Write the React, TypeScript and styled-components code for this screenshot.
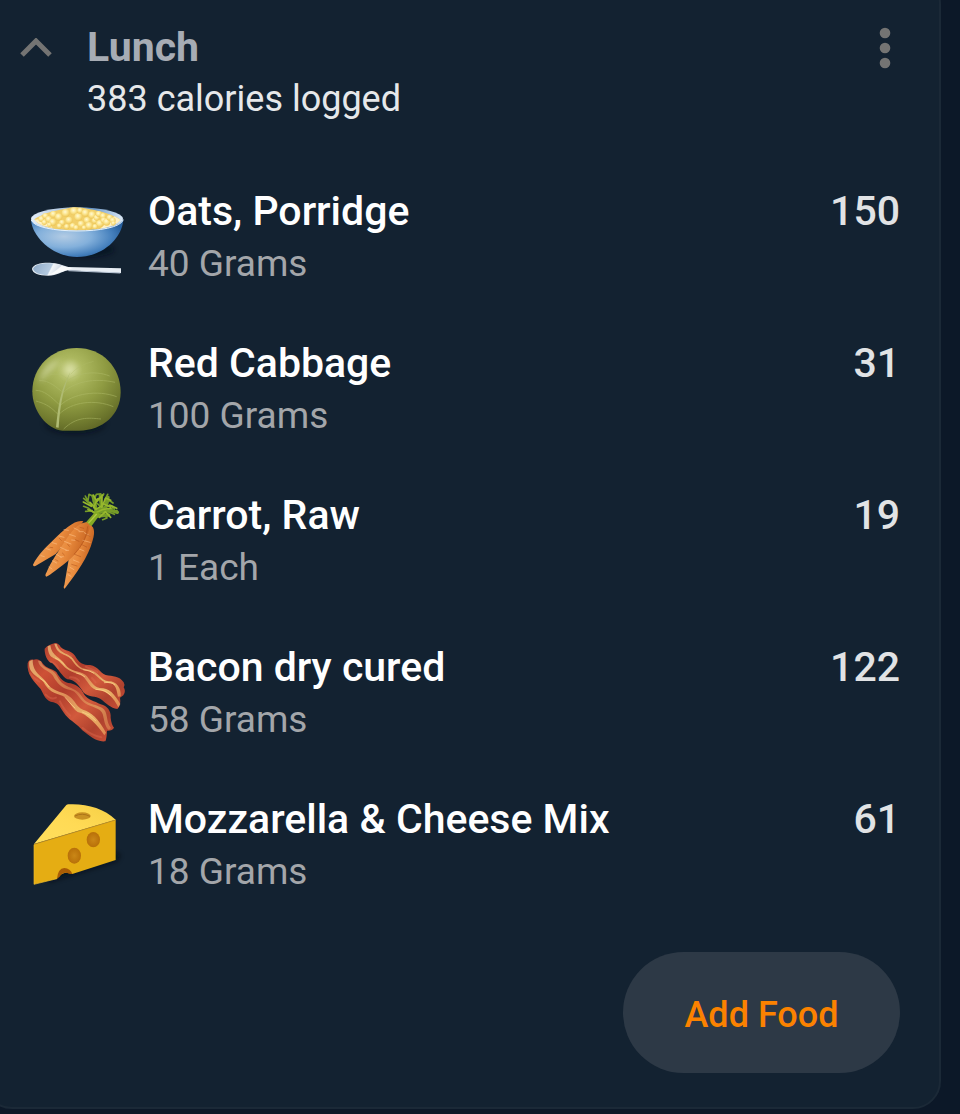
import React from "react";
import styled, { createGlobalStyle } from "styled-components";

const GlobalStyle = createGlobalStyle`
  *, *::before, *::after { box-sizing: border-box; }
  body {
    margin: 0;
    overflow-x: hidden;
    background: #0c1828;
    font-family: Roboto, "Noto Sans", sans-serif;
  }
`;

const Card = styled.section`
  margin: -24px 19px 5px -16px;
  padding: 43px 39px 34px 14px;
  border: 2px solid #1b2937;
  border-radius: 28px;
  background: #132231;
`;

const Header = styled.header`
  display: flex;
  align-items: flex-start;
  margin-bottom: 60px;
`;

const IconButton = styled.button`
  display: flex;
  align-items: center;
  justify-content: center;
  height: 54px;
  padding: 0;
  border: 0;
  background: none;
  color: #747473;
  cursor: pointer;
`;

const CollapseButton = styled(IconButton)`
  width: 72px;
  margin-right: 15px;
`;

const MenuButton = styled(IconButton)`
  width: 30px;
`;

const Heading = styled.div`
  flex: 1;
`;

const Title = styled.h2`
  margin: 0;
  font-size: 41px;
  font-weight: 700;
  line-height: 53px;
  color: #a7acb4;
`;

const Summary = styled.p`
  margin: 0;
  font-size: 36px;
  line-height: 51px;
  color: #e6e8ea;
`;

const FoodList = styled.ul`
  display: flex;
  flex-direction: column;
  gap: 48px;
  margin: 0;
  padding: 0 0 0 24px;
  list-style: none;
`;

const FoodRow = styled.li`
  display: flex;
  align-items: flex-start;
  gap: 20px;
`;

const Picture = styled.svg`
  flex: none;
  width: 104px;
  height: 104px;
  overflow: visible;
`;

const FoodText = styled.div`
  flex: 1;
`;

const FoodName = styled.h3`
  margin: 0;
  font-size: 41px;
  font-weight: 500;
  line-height: 53px;
  color: #ffffff;
`;

const Amount = styled.p`
  margin: 0;
  font-size: 37px;
  line-height: 51px;
  color: #a3a6aa;
`;

const Calories = styled.span`
  font-size: 41px;
  font-weight: 500;
  line-height: 53px;
  color: #e1e3e5;
`;

const Footer = styled.footer`
  display: flex;
  justify-content: flex-end;
  margin-top: 55px;
`;

const AddButton = styled.button`
  height: 121px;
  min-width: 277px;
  padding: 4px 56px 0;
  border: 0;
  border-radius: 61px;
  background: #2d3946;
  color: #fb8200;
  font-family: inherit;
  font-size: 36px;
  font-weight: 500;
  cursor: pointer;
`;

const grains: [number, number, number][] = [
  [124, 117, 9], [136, 108, 9], [133, 127, 8], [146, 118, 10], [160, 103, 10], [158, 127, 11],
  [176, 111, 11], [186, 128, 9], [178, 138, 8], [197, 99, 12], [207, 121, 11], [200, 140, 8],
  [222, 94, 12], [218, 138, 9], [235, 111, 12], [243, 132, 10], [240, 92, 9], [256, 99, 11],
  [261, 121, 10], [267, 137, 11], [276, 105, 11], [284, 122, 9], [290, 113, 9], [296, 102, 9],
  [299, 131, 11], [309, 108, 9], [311, 121, 9], [320, 126, 11], [329, 113, 9], [338, 121, 9],
  [228, 143, 8], [252, 143, 7], [285, 140, 8], [340, 130, 7], [148, 134, 7],
];

const Porridge = () => (
  <Picture viewBox="72 15 312 312" aria-hidden="true">
    <defs>
      <radialGradient id="bowl" cx="0.36" cy="0.45" r="0.65">
        <stop offset="0" stopColor="#b2cbe4" />
        <stop offset="0.45" stopColor="#83b0db" />
        <stop offset="0.8" stopColor="#4580bd" />
        <stop offset="1" stopColor="#28609e" />
      </radialGradient>
      <linearGradient id="rim" x1="0" x2="1">
        <stop offset="0" stopColor="#e4eef9" />
        <stop offset="0.4" stopColor="#a7c0dc" />
        <stop offset="0.65" stopColor="#6392c5" />
        <stop offset="1" stopColor="#dceaf7" />
      </linearGradient>
      <radialGradient id="grain" cx="0.43" cy="0.36" r="0.65">
        <stop offset="0" stopColor="#fff8d6" />
        <stop offset="0.4" stopColor="#fdea9a" />
        <stop offset="1" stopColor="#ecc454" />
      </radialGradient>
      <linearGradient id="spoon" x1="0" x2="1" y1="0.2" y2="0.4">
        <stop offset="0" stopColor="#8fabc9" />
        <stop offset="0.6" stopColor="#b4cadf" />
        <stop offset="0.65" stopColor="#f3f7fa" />
        <stop offset="1" stopColor="#c7d1df" />
      </linearGradient>
      <filter id="bowlShade" x="-20%" y="-50%" width="140%" height="200%">
        <feGaussianBlur stdDeviation="8" />
      </filter>
    </defs>
    <ellipse cx="260" cy="209" rx="82" ry="22" fill="#06101c" opacity="0.6" filter="url(#bowlShade)" />
    <path d="M93 119C97 174 162 231 231 231C306 231 366 176 370 119Z" fill="url(#bowl)" />
    <ellipse cx="231" cy="117" rx="138" ry="35" fill="url(#rim)" />
    <path d="M103 118C122 103 162 91 197 86Q230 77 266 87C304 93 344 106 361 119C346 140 301 150 232 151C163 151 116 140 103 118Z" fill="#f1cf6a" />
    <path d="M104 119C108 128 131 139 158 143L132 116ZM361 119C354 131 330 142 300 146L343 109Z" fill="#fff0c2" />
    {grains.map(([x, y, r]) => (
      <circle key={`${x}-${y}`} cx={x} cy={y} r={r} fill="url(#grain)" />
    ))}
    <path d="M94 120C105 163 357 165 370 119" fill="none" stroke="#e5f1fc" strokeWidth="3" />
    <path d="M96 267C98 253 121 248 145 248C167 247 183 254 205 261L363 265V279L246 273L204 271C184 275 171 287 145 287C116 286 98 281 96 267Z" fill="#e7edf3" />
    <path d="M99 266C107 252 128 250 148 250Q169 250 188 257C171 269 159 282 143 285C119 284 103 279 99 266Z" fill="url(#spoon)" />
    <path d="M184 258C170 270 158 281 143 285C165 286 183 273 204 270L218 265Z" fill="#f9fbfb" />
    <path d="M205 272L361 279" fill="none" stroke="#bdc9d8" strokeWidth="3" />
  </Picture>
);

const Cabbage = () => (
  <Picture viewBox="72 21 312 312" aria-hidden="true">
    <defs>
      <radialGradient id="cabbageLeaf" cx="0.42" cy="0.27" r="0.75">
        <stop offset="0" stopColor="#c9d28a" />
        <stop offset="0.2" stopColor="#acb85f" />
        <stop offset="0.55" stopColor="#8f9b42" />
        <stop offset="0.85" stopColor="#717b2f" />
        <stop offset="1" stopColor="#616927" />
      </radialGradient>
      <filter id="leafSoft" x="-80%" y="-80%" width="260%" height="260%">
        <feGaussianBlur stdDeviation="9" />
      </filter>
      <filter id="leafShade" x="-30%" y="-60%" width="160%" height="240%">
        <feGaussianBlur stdDeviation="9" />
      </filter>
    </defs>
    <ellipse cx="225" cy="280" rx="87" ry="30" fill="#040d15" opacity="0.65" filter="url(#leafShade)" />
    <path d="M97 184C97 111 155 54 230 54C307 54 362 111 362 187C362 253 309 302 237 302H187C142 299 97 244 97 184Z" fill="url(#cabbageLeaf)" />
    <path d="M117 160C125 121 150 95 184 88C163 109 142 126 117 160Z" fill="#e3e8bd" opacity="0.8" filter="url(#leafSoft)" />
    <ellipse cx="211" cy="118" rx="18" ry="20" fill="#e6eab8" opacity="0.5" filter="url(#leafSoft)" />
    <path d="M168 292C173 244 178 201 193 165Q201 145 212 124Q199 153 190 188C182 223 178 257 176 293Z" fill="#afbb73" />
    <g fill="none" stroke="#b0bc6a" strokeWidth="3" opacity="0.5">
      <path d="M202 147C181 127 157 129 128 143M190 188C171 174 150 151 117 151M179 225C151 198 132 181 107 181M175 254C147 224 128 219 108 213" />
      <path d="M198 157C224 131 281 119 329 138M190 187C222 155 284 143 345 157M181 226C219 190 292 179 350 200M177 253C215 215 285 207 340 230M191 297C229 260 264 263 303 267" />
      <path d="M212 133Q236 104 281 94" strokeWidth="2" />
    </g>
  </Picture>
);

const Carrot = () => (
  <Picture viewBox="72 27 312 312" aria-hidden="true">
    <defs>
      <linearGradient id="carrotRoot" x1="0" x2="1" y1="0.2" y2="0.65">
        <stop offset="0" stopColor="#f3ad67" />
        <stop offset="0.5" stopColor="#e98b3d" />
        <stop offset="1" stopColor="#b95416" />
      </linearGradient>
    </defs>
    <g fill="none" stroke="#769c28" strokeWidth="5" strokeLinecap="round" strokeLinejoin="round">
      <path d="M269 133L289 105L286 77L279 48M288 104L304 80L301 44M289 99L319 79L324 52M293 96L333 91L352 97M289 108L326 105" strokeWidth="10" />
      <path d="M288 104L266 85L251 79M277 92L257 94M286 79L264 65L256 48M271 73L251 55M280 63L289 43L297 42M279 49L267 43L264 62M303 81L288 67L285 54M299 62L311 42M304 75L329 62L339 69M318 77L338 79L343 87M319 78L315 58L323 43M311 90L343 103M312 99L321 114L308 119M326 96L351 92M302 102L319 111" />
      <path d="M281 83L292 57L306 52L305 82L317 54L332 61M270 67L288 88L312 73L331 80M264 89L287 98L310 88L337 84M280 46L291 64L308 45M298 112L316 95L332 112M250 66L274 79M329 75L350 85" stroke="#96b72c" />
    </g>
    <path d="M256 129L286 95L302 101L273 140Z" fill="#84aa24" />
    <path d="M265 130L290 102" stroke="#b3c946" strokeWidth="4" />
    <path d="M262 135C282 132 287 153 278 181C267 228 226 286 194 326Q189 324 193 315L207 233L238 172Z" fill="url(#carrotRoot)" />
    <path d="M250 124C226 117 193 148 163 177C139 200 112 227 99 254Q100 263 110 256L166 223L229 155Z" fill="url(#carrotRoot)" />
    <path d="M258 127C277 132 269 152 256 176C242 204 220 231 197 248C175 265 153 283 139 290Q133 287 140 276C151 248 178 209 196 182C213 158 231 130 258 127Z" fill="url(#carrotRoot)" />
    <g fill="none" stroke="#ffc58c" strokeWidth="3" strokeLinecap="round" opacity="0.55">
      <path d="M222 144L238 152M208 163L226 169M193 184L213 192M181 202L201 211M168 222L184 232M157 242L170 249M147 261L156 267M237 155L250 155M215 180L225 181M197 211L206 211M181 231L190 230M192 149L205 151M177 168L192 172M157 188L170 192M139 206L151 210M123 227L133 230M249 181L270 187M238 207L252 213M220 240L237 247M210 262L222 269M204 284L213 289M253 158L267 166" />
    </g>
    <g fill="none" stroke="#a94917" strokeWidth="3" strokeLinecap="round" opacity="0.45">
      <path d="M240 142L251 145M226 179L237 184M203 193L208 199M187 219L193 225M167 239L174 243M178 175L184 181M150 202L158 203M260 163L270 169M246 194L260 201M224 223L242 230M215 253L231 258M203 276L211 279M263 140Q260 185 223 222" />
    </g>
  </Picture>
);

const Bacon = () => (
  <Picture viewBox="72 33 312 312" aria-hidden="true">
    <defs>
      <linearGradient id="meat" x1="0" x2="1" y1="0" y2="1" spreadMethod="reflect">
        <stop offset="0" stopColor="#a93d2d" />
        <stop offset="0.18" stopColor="#ce5136" />
        <stop offset="0.4" stopColor="#b03d2c" />
        <stop offset="0.62" stopColor="#d25a3c" />
        <stop offset="0.8" stopColor="#b0422e" />
        <stop offset="1" stopColor="#cc5038" />
      </linearGradient>
      <linearGradient id="fat" x1="0" x2="1" y1="0" y2="1">
        <stop offset="0" stopColor="#e0a06a" />
        <stop offset="0.25" stopColor="#e8ac64" />
        <stop offset="0.5" stopColor="#dc8a56" />
        <stop offset="0.75" stopColor="#eab96c" />
        <stop offset="1" stopColor="#e08750" />
      </linearGradient>
    </defs>
    <path d="M134 56Q144 44 166 39Q176 40 182 51C197 64 211 60 225 77C237 99 249 105 270 105C296 110 299 128 317 135C338 139 358 137 371 157Q376 165 371 172Q379 184 370 196L360 203Q364 226 352 237C332 235 318 219 302 207C287 196 267 203 251 188C236 164 223 149 202 148C188 141 176 118 157 99C141 97 133 70 134 56Z" fill="url(#meat)" />
    <path d="M143 49C145 92 167 79 186 103C207 127 225 128 247 138C262 148 271 181 296 181C321 182 342 205 355 232L361 222C343 191 328 174 299 174C278 170 269 145 256 134C235 122 211 125 195 103C182 82 155 79 151 46Z" fill="url(#fat)" />
    <path d="M163 41C172 77 199 70 214 88C228 110 240 121 266 124C291 132 299 155 323 159C349 157 350 183 354 200L362 199C365 174 348 153 326 154C302 151 295 125 270 119C245 117 236 111 222 90C207 66 180 75 170 42Z" fill="url(#fat)" />
    <path d="M83 100Q86 86 101 89Q118 85 127 99C138 116 154 115 169 126C181 146 191 159 212 160C231 165 242 173 253 194C264 210 283 212 302 223C322 227 334 244 332 263Q334 283 342 293Q337 303 321 302Q320 326 316 334C288 337 270 318 247 301C231 281 212 274 197 256C181 235 178 221 160 217C138 214 132 196 122 177C105 158 79 134 83 100Z" fill="url(#meat)" />
    <path d="M88 94C82 132 116 138 131 157C145 183 163 191 187 197C207 206 211 231 233 246C260 250 294 287 313 316L318 308C302 278 284 254 258 242C231 236 230 219 214 204C195 185 164 188 145 165C132 140 97 131 98 89Z" fill="url(#fat)" />
    <path d="M114 92C119 119 147 119 159 137C170 159 185 175 211 180C230 183 237 206 253 218C276 233 302 233 308 252C313 269 314 291 327 300L333 294C315 272 327 246 306 233C282 222 258 220 249 204C231 175 211 177 192 163C173 151 172 126 151 119Q126 110 123 94Z" fill="url(#fat)" opacity="0.6" />
    <g fill="none" stroke="#ffd18a" strokeWidth="3" strokeLinecap="round" opacity="0.7">
      <path d="M120 145Q136 152 147 170M196 203Q209 219 225 234M247 246Q269 251 287 272M166 84Q183 91 193 104M230 129Q244 131 254 140M288 178Q315 178 331 195M251 119Q269 121 281 129M313 158Q333 155 344 164" />
    </g>
    <path d="M91 130Q99 145 118 155M137 194Q154 211 168 203M180 214Q191 239 211 257M248 294Q274 316 304 322M151 95Q168 101 175 115M210 142Q228 141 237 153M276 144L287 157M184 58L215 78M257 110L292 126" fill="none" stroke="#e06b4f" strokeWidth="6" strokeLinecap="round" opacity="0.4" />
  </Picture>
);

const Cheese = () => (
  <Picture viewBox="72 9 312 312" aria-hidden="true">
    <defs>
      <linearGradient id="cheeseTop" x1="0" x2="1" y1="1" y2="0">
        <stop offset="0" stopColor="#ffdf5d" />
        <stop offset="0.5" stopColor="#ffda55" />
        <stop offset="1" stopColor="#f6cf45" />
      </linearGradient>
      <radialGradient id="hole">
        <stop offset="0" stopColor="#ca8716" />
        <stop offset="1" stopColor="#b87009" />
      </radialGradient>
      <filter id="cheeseShade" x="-20%" y="-50%" width="140%" height="200%">
        <feGaussianBlur stdDeviation="8" />
      </filter>
    </defs>
    <path d="M145 276L349 213L362 196L316 173L139 244Z" fill="#030b14" opacity="0.7" filter="url(#cheeseShade)" />
    <path d="M102 163L347 89V210L217 252C204 243 184 247 171 266L102 283Z" fill="#e5ad13" />
    <path d="M102 162L199 45Q202 42 208 43C263 41 311 56 347 89Z" fill="url(#cheeseTop)" />
    <path d="M102 163L347 90" fill="none" stroke="#b88823" strokeWidth="2" />
    <path d="M102 164V283L171 266" fill="none" stroke="#f0bd2c" strokeWidth="2" />
    <ellipse cx="247" cy="78" rx="25" ry="11" fill="#c99223" />
    <path d="M225 78Q246 67 270 79" fill="none" stroke="#ac7418" strokeWidth="3" />
    <ellipse cx="280" cy="149" rx="20" ry="23" fill="url(#hole)" />
    <ellipse cx="223" cy="197" rx="20" ry="24" fill="url(#hole)" />
    <path d="M171 266Q174 235 193 234Q211 235 217 252Q207 253 202 249Q187 246 179 260Z" fill="#a95c05" />
  </Picture>
);

const foods = [
  { name: "Oats, Porridge", amount: "40 Grams", calories: 150, Icon: Porridge },
  { name: "Red Cabbage", amount: "100 Grams", calories: 31, Icon: Cabbage },
  { name: "Carrot, Raw", amount: "1 Each", calories: 19, Icon: Carrot },
  { name: "Bacon dry cured", amount: "58 Grams", calories: 122, Icon: Bacon },
  { name: "Mozzarella & Cheese Mix", amount: "18 Grams", calories: 61, Icon: Cheese },
];

export default function App() {
  return (
    <>
      <GlobalStyle />
      <Card aria-labelledby="meal-title">
        <Header>
          <CollapseButton type="button" aria-label="Collapse Lunch" aria-expanded="true">
            <svg width="32" height="20" viewBox="0 0 32 20" aria-hidden="true">
              <path d="M2 17L16 3L30 17" fill="none" stroke="currentColor" strokeWidth="5" />
            </svg>
          </CollapseButton>
          <Heading>
            <Title id="meal-title">Lunch</Title>
            <Summary>383 calories logged</Summary>
          </Heading>
          <MenuButton type="button" aria-label="Lunch options">
            <svg width="12" height="42" viewBox="0 0 12 42" fill="currentColor" aria-hidden="true">
              <circle cx="6" cy="6" r="5.300" />
              <circle cx="6" cy="21" r="5.300" />
              <circle cx="6" cy="36" r="5.300" />
            </svg>
          </MenuButton>
        </Header>
        <FoodList>
          {foods.map(({ name, amount, calories, Icon }) => (
            <FoodRow key={name}>
              <Icon />
              <FoodText>
                <FoodName>{name}</FoodName>
                <Amount>{amount}</Amount>
              </FoodText>
              <Calories>{calories}</Calories>
            </FoodRow>
          ))}
        </FoodList>
        <Footer>
          <AddButton type="button">Add Food</AddButton>
        </Footer>
      </Card>
    </>
  );
}
